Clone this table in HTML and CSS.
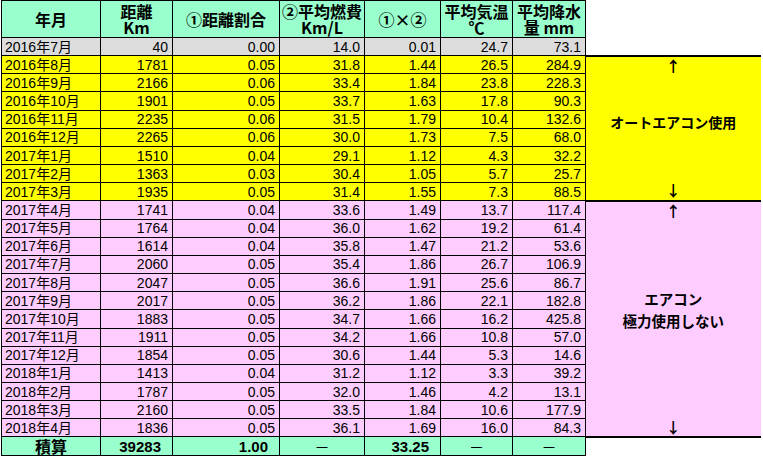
FILE: index.html
```html
<!DOCTYPE html>
<html lang="ja">
<head>
<meta charset="utf-8">
<link rel="stylesheet" href="styles.css">
</head>
<body>
<table class="sheet">
  <colgroup>
    <col class="c-month"><col class="c-dist"><col class="c-ratio"><col class="c-fuel"><col class="c-prod"><col class="c-temp"><col class="c-rain"><col class="c-side">
  </colgroup>
  <thead>
    <tr class="head">
      <th>年月</th>
      <th>距離<br>Km</th>
      <th>①距離割合</th>
      <th>②平均燃費<br>Km/L</th>
      <th>①×②</th>
      <th>平均気温<br>℃</th>
      <th>平均降水<br>量 mm</th>
      <td class="blank"></td>
    </tr>
  </thead>
  <tbody>
    <tr class="row grey"><td class="m">2016年7月</td><td>40</td><td>0.00</td><td>14.0</td><td>0.01</td><td>24.7</td><td>73.1</td><td class="blank"></td></tr>
    <tr class="row yellow"><td class="m">2016年8月</td><td>1781</td><td>0.05</td><td>31.8</td><td>1.44</td><td>26.5</td><td>284.9</td>
      <td class="side side-yellow" rowspan="8">
        <div class="side-box side-box-y">
          <span class="arrow">↑</span>
          <span class="label label-y">オートエアコン使用</span>
          <span class="arrow">↓</span>
        </div>
      </td></tr>
    <tr class="row yellow"><td class="m">2016年9月</td><td>2166</td><td>0.06</td><td>33.4</td><td>1.84</td><td>23.8</td><td>228.3</td></tr>
    <tr class="row yellow"><td class="m">2016年10月</td><td>1901</td><td>0.05</td><td>33.7</td><td>1.63</td><td>17.8</td><td>90.3</td></tr>
    <tr class="row yellow"><td class="m">2016年11月</td><td>2235</td><td>0.06</td><td>31.5</td><td>1.79</td><td>10.4</td><td>132.6</td></tr>
    <tr class="row yellow"><td class="m">2016年12月</td><td>2265</td><td>0.06</td><td>30.0</td><td>1.73</td><td>7.5</td><td>68.0</td></tr>
    <tr class="row yellow"><td class="m">2017年1月</td><td>1510</td><td>0.04</td><td>29.1</td><td>1.12</td><td>4.3</td><td>32.2</td></tr>
    <tr class="row yellow"><td class="m">2017年2月</td><td>1363</td><td>0.03</td><td>30.4</td><td>1.05</td><td>5.7</td><td>25.7</td></tr>
    <tr class="row yellow"><td class="m">2017年3月</td><td>1935</td><td>0.05</td><td>31.4</td><td>1.55</td><td>7.3</td><td>88.5</td></tr>
    <tr class="row pink"><td class="m">2017年4月</td><td>1741</td><td>0.04</td><td>33.6</td><td>1.49</td><td>13.7</td><td>117.4</td>
      <td class="side side-pink" rowspan="13">
        <div class="side-box side-box-p">
          <span class="arrow">↑</span>
          <span class="label label-p">エアコン<br>極力使用しない</span>
          <span class="arrow">↓</span>
        </div>
      </td></tr>
    <tr class="row pink"><td class="m">2017年5月</td><td>1764</td><td>0.04</td><td>36.0</td><td>1.62</td><td>19.2</td><td>61.4</td></tr>
    <tr class="row pink"><td class="m">2017年6月</td><td>1614</td><td>0.04</td><td>35.8</td><td>1.47</td><td>21.2</td><td>53.6</td></tr>
    <tr class="row pink"><td class="m">2017年7月</td><td>2060</td><td>0.05</td><td>35.4</td><td>1.86</td><td>26.7</td><td>106.9</td></tr>
    <tr class="row pink"><td class="m">2017年8月</td><td>2047</td><td>0.05</td><td>36.6</td><td>1.91</td><td>25.6</td><td>86.7</td></tr>
    <tr class="row pink"><td class="m">2017年9月</td><td>2017</td><td>0.05</td><td>36.2</td><td>1.86</td><td>22.1</td><td>182.8</td></tr>
    <tr class="row pink"><td class="m">2017年10月</td><td>1883</td><td>0.05</td><td>34.7</td><td>1.66</td><td>16.2</td><td>425.8</td></tr>
    <tr class="row pink"><td class="m">2017年11月</td><td>1911</td><td>0.05</td><td>34.2</td><td>1.66</td><td>10.8</td><td>57.0</td></tr>
    <tr class="row pink"><td class="m">2017年12月</td><td>1854</td><td>0.05</td><td>30.6</td><td>1.44</td><td>5.3</td><td>14.6</td></tr>
    <tr class="row pink"><td class="m">2018年1月</td><td>1413</td><td>0.04</td><td>31.2</td><td>1.12</td><td>3.3</td><td>39.2</td></tr>
    <tr class="row pink"><td class="m">2018年2月</td><td>1787</td><td>0.05</td><td>32.0</td><td>1.46</td><td>4.2</td><td>13.1</td></tr>
    <tr class="row pink"><td class="m">2018年3月</td><td>2160</td><td>0.05</td><td>33.5</td><td>1.84</td><td>10.6</td><td>177.9</td></tr>
    <tr class="row pink"><td class="m">2018年4月</td><td>1836</td><td>0.05</td><td>36.1</td><td>1.69</td><td>16.0</td><td>84.3</td></tr>
  </tbody>
  <tfoot>
    <tr class="total">
      <td class="t-label">積算</td>
      <td class="t-num">39283</td>
      <td class="t-num">1.00</td>
      <td class="t-dash">－</td>
      <td class="t-num">33.25</td>
      <td class="t-dash">－</td>
      <td class="t-dash">－</td>
      <td class="blank"></td>
    </tr>
  </tfoot>
</table>
</body>
</html>
```

FILE: styles.css
```css
html, body {
  margin: 0;
  padding: 0;
  background: #ffffff;
}

body {
  font-family: "Liberation Sans", "Noto Sans CJK JP", sans-serif;
  color: #000000;
}

.sheet {
  border-collapse: collapse;
  table-layout: fixed;
  width: 759px;
  margin: 0 0 0 1px;
}

.c-month { width: 99px; }
.c-dist  { width: 72px; }
.c-ratio { width: 107px; }
.c-fuel  { width: 85px; }
.c-prod  { width: 76px; }
.c-temp  { width: 72px; }
.c-rain  { width: 73px; }
.c-side  { width: 175px; }

.sheet th,
.sheet td {
  border: 1px solid #000000;
  padding: 0;
  white-space: nowrap;
}

.sheet td.blank {
  border: none;
  background: #ffffff;
}

.head {
  height: 37px;
}

.head th {
  background: #99ffcc;
  font-family: "Noto Sans CJK JP", "Liberation Sans", sans-serif;
  font-weight: 700;
  font-size: 16px;
  line-height: 16px;
  text-align: center;
  vertical-align: middle;
}

.row {
  height: 18.17px;
}

.row td {
  font-size: 14px;
  line-height: 16px;
  text-align: right;
  padding-right: 4px;
  vertical-align: middle;
}

.row td.m {
  text-align: left;
  padding-left: 3px;
  padding-right: 0;
}

.grey td { background: #dcdcdc; }
.yellow td { background: #ffff00; }
.pink td { background: #ffccff; }

.sheet td.side {
  padding: 0;
  border-left: 1px solid #000000;
  border-right: none;
  border-top: 2px solid #000000;
  border-bottom: 2px solid #000000;
  vertical-align: top;
}

.side-yellow { background: #ffff00; }
.side-pink { background: #ffccff; }

.side-box {
  display: flex;
  flex-direction: column;
  align-items: center;
  justify-content: space-between;
  font-family: "Noto Sans CJK JP", sans-serif;
}

.side-box-y { height: 142px; }
.side-box-p { height: 234px; }

.arrow {
  font-size: 15px;
  font-weight: 700;
  line-height: 18px;
  height: 18px;
}

.label {
  font-size: 14px;
  font-weight: 700;
  line-height: 22px;
  text-align: center;
}

.label-y { margin-bottom: 12px; }
.label-p { margin-bottom: 18px; font-size: 14.5px; }

.total {
  height: 19px;
}

.total td {
  background: #99ffcc;
  font-weight: 700;
  font-size: 15px;
  line-height: 17px;
  vertical-align: middle;
}

.total td.t-label {
  font-family: "Noto Sans CJK JP", sans-serif;
  font-size: 16px;
  text-align: center;
}

.total td.t-num {
  text-align: right;
  padding-right: 11px;
}

.total td.t-dash {
  text-align: center;
  font-family: "Noto Sans CJK JP", sans-serif;
  font-weight: 400;
}
```
